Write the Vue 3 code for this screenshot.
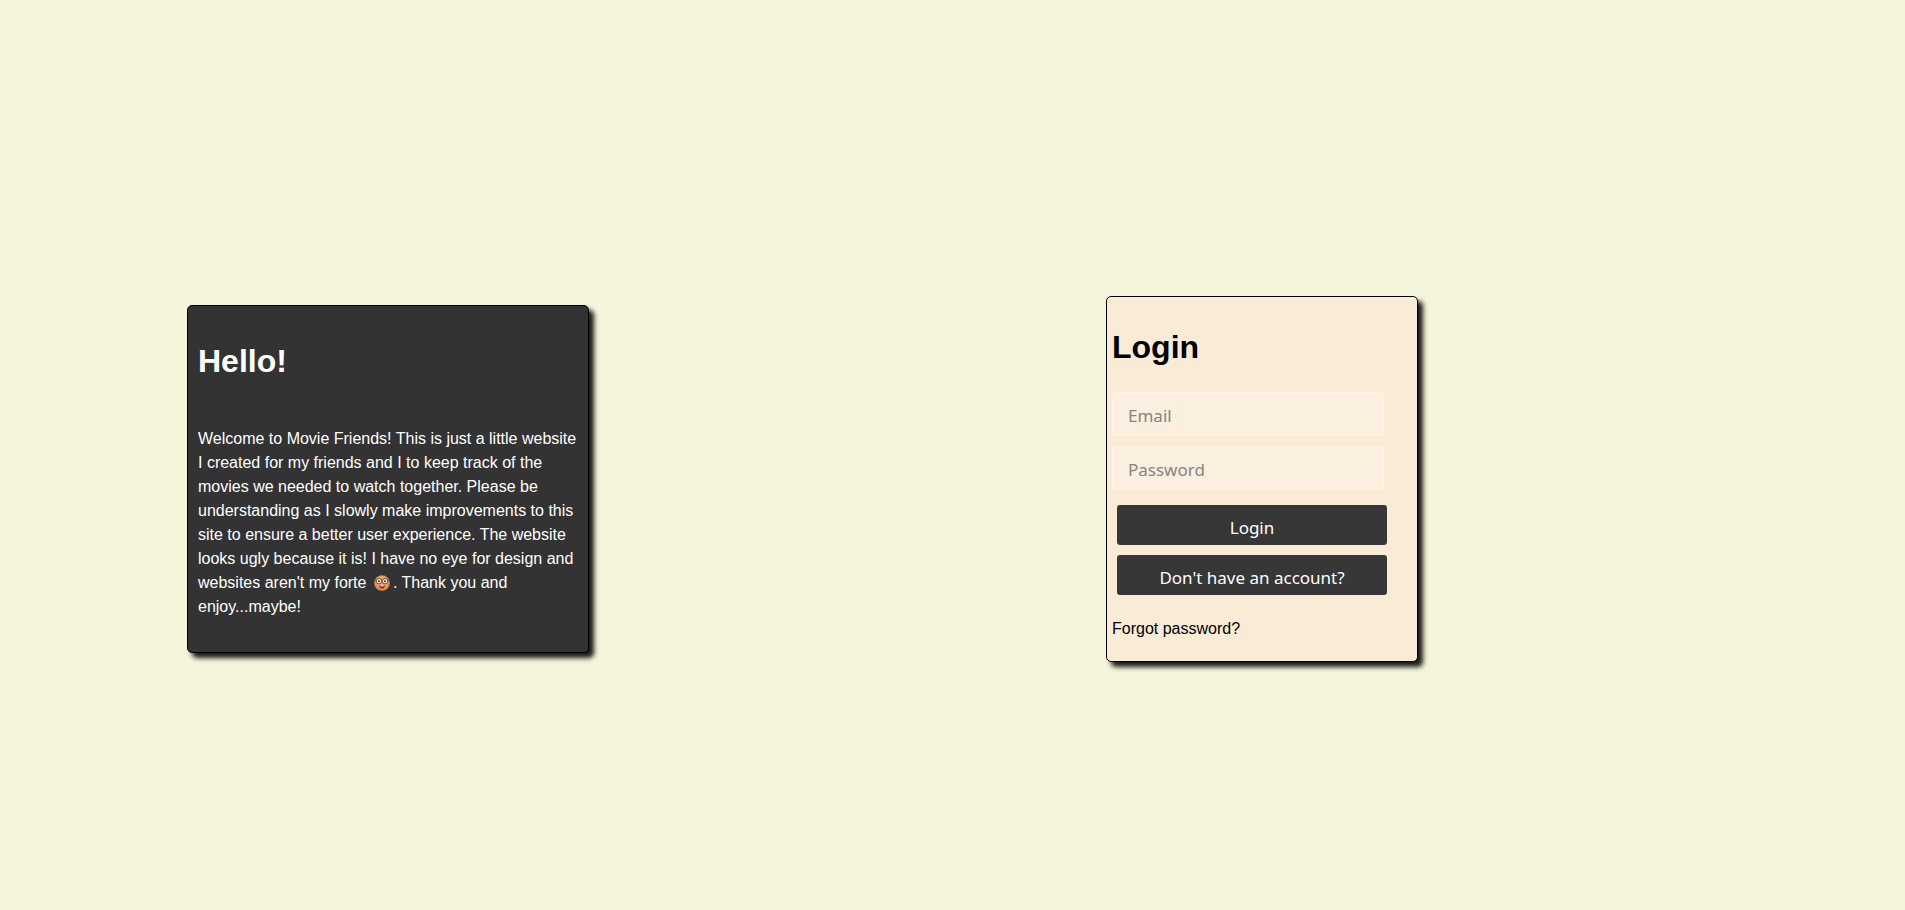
<template>
  <main class="page">
    <section class="card hello">
      <h1>Hello!</h1>
      <p>
        Welcome to Movie Friends! This is just a little website I created for my friends and I to keep track of the movies we needed to watch together. Please be understanding as I slowly make improvements to this site to ensure a better user experience. The website looks ugly because it is! I have no eye for design and websites aren't my forte
        <svg class="emoji" viewBox="0 0 16 16" width="16" height="16">
          <circle cx="8" cy="8" r="7.8" fill="#d8924f" />
          <circle cx="8" cy="7" r="6" fill="#eaa964" />
          <rect x="1" y="5.2" width="14" height="1" fill="#7a4a2a" />
          <circle cx="5" cy="6.2" r="2.7" fill="#f8f0e4" stroke="#6a3c24" stroke-width="0.9" />
          <circle cx="11" cy="6.2" r="2.7" fill="#f8f0e4" stroke="#6a3c24" stroke-width="0.9" />
          <circle cx="5" cy="6.2" r="1" fill="#3a2a22" />
          <circle cx="11" cy="6.2" r="1" fill="#3a2a22" />
          <path d="M5 10.4 Q8 9.6 11 10.4 Q10.6 13.4 8 13.4 Q5.4 13.4 5 10.4Z" fill="#b0241f" />
          <rect x="6.4" y="10.2" width="3.2" height="1.1" fill="#f4efe6" />
        </svg>. Thank you and enjoy...maybe!
      </p>
    </section>

    <form class="card login" @submit.prevent>
      <h1>Login</h1>
      <input type="email" placeholder="Email" />
      <input type="password" placeholder="Password" />
      <button type="submit" class="first">Login</button>
      <button type="button">Don't have an account?</button>
      <a href="#" class="forgot">Forgot password?</a>
    </form>
  </main>
</template>

<script setup>
</script>

<style>
html, body {
  margin: 0;
  background: #f5f5dc;
}
</style>

<style scoped>
.page {
  box-sizing: border-box;
  height: 910px;
  padding: 48px 0 0 187px;
  display: flex;
  align-items: center;
  gap: 517px;
  overflow: hidden;
  font-family: "Liberation Sans", Arial, sans-serif;
  font-size: 16px;
  line-height: 24px;
}

.card {
  box-sizing: border-box;
  border: 1px solid #000;
  border-radius: 5px;
  box-shadow: 5px 5px 5px rgba(0, 0, 0, 0.9);
}

h1 {
  margin: 0;
  font-size: 32px;
  line-height: 48px;
  font-weight: bold;
}

.hello {
  width: 402px;
  height: 348px;
  padding: 31px 10px 0;
  background: #333;
  color: #fff;
}

.hello p {
  margin: 42px 0 0;
}

.emoji {
  vertical-align: -3px;
  margin: 0 3px 0 3px;
}

.login {
  width: 312px;
  height: 366px;
  padding: 26px 5px 0;
  background: #faebd7;
  color: #000;
  display: flex;
  flex-direction: column;
  align-items: flex-start;
}

input {
  box-sizing: border-box;
  width: 272px;
  height: 44px;
  margin: 0;
  padding: 2px 15px 0;
  border: 1px dotted rgba(255, 255, 255, 0.75);
  border-radius: 3px;
  background: rgba(255, 255, 255, 0.2);
  font-family: "Noto Sans", sans-serif;
  font-size: 17px;
  outline: none;
}

.login h1 {
  margin-bottom: 21px;
}

input + input {
  margin-top: 10px;
}

input::placeholder {
  color: #85857c;
}

button {
  box-sizing: border-box;
  width: 270px;
  height: 40px;
  margin: 10px 0 0 5px;
  padding: 4px 0 0;
  border: 0;
  border-radius: 3px;
  background: #373737;
  color: #fff;
  font-family: "Noto Sans", sans-serif;
  font-size: 17px;
}

button.first {
  margin-top: 15px;
}

.forgot {
  margin-top: 22px;
  color: #000;
  text-decoration: none;
}
</style>
